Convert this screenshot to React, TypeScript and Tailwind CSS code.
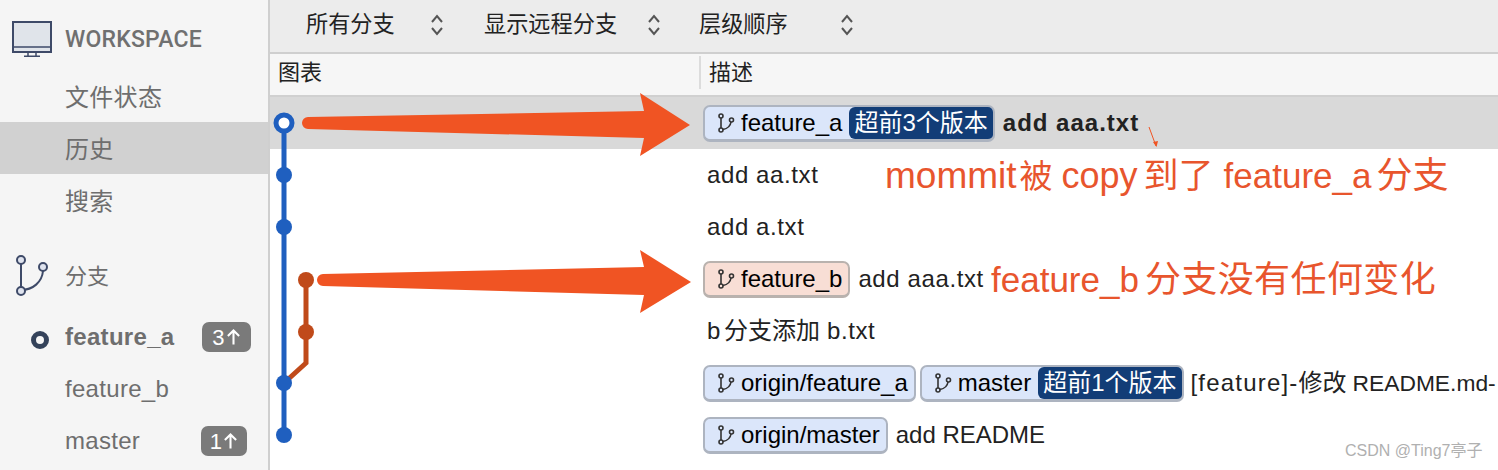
import React from 'react';

const FONT = "font-['Liberation_Sans','Noto_Sans_CJK_SC',sans-serif]";

const BranchGlyph: React.FC<{ className?: string }> = ({ className }) => (
  <svg viewBox="0 0 18 20" className={className} fill="none" stroke="currentColor" strokeWidth="1.6">
    <circle cx="4" cy="3" r="2" />
    <circle cx="4" cy="17" r="2" />
    <circle cx="14.5" cy="7" r="2" />
    <path d="M4 5v10M6 16.5c5-1 7.5-4 8-7.5" />
  </svg>
);

const Updown: React.FC = () => (
  <svg viewBox="0 0 14 24" className="w-[14px] h-[24px] text-[#555]" fill="none" stroke="currentColor" strokeWidth="2">
    <path d="M2 9l5-6 5 6M2 15l5 6 5-6" />
  </svg>
);

const Tag: React.FC<{ name: string; tone?: 'blue' | 'red'; ahead?: string }> = ({ name, tone = 'blue', ahead }) => (
  <span
    className={`flex items-stretch h-[37px] rounded-[7px] border-2 border-b-[3px] overflow-hidden shrink-0 text-black ${
      tone === 'blue' ? 'bg-[#dbe6fa] border-[#adb4c0]' : 'bg-[#f8ded5] border-[#b9b2ae]'
    }`}
  >
    <span className={`flex items-center pl-[12px] gap-[6px] ${ahead ? 'pr-[7px]' : 'pr-[6px]'}`}>
      <BranchGlyph className="w-[18px] h-[20px] text-[#333]" />
      {name}
    </span>
    {ahead && <span className="flex items-center px-[5px] bg-[#123d77] text-white rounded-l-[6px]">{ahead}</span>}
  </span>
);

const Row: React.FC<{ selected?: boolean; children: React.ReactNode }> = ({ selected, children }) => (
  <div className={`flex h-[52px] items-center ${selected ? 'bg-[#d9d9d9]' : ''}`}>
    <div className="w-[433px] shrink-0" />
    <div className="flex items-center gap-[4px] whitespace-nowrap min-w-0 text-[24px] text-[#222]">{children}</div>
  </div>
);

const SideBadge: React.FC<{ count: string; className?: string }> = ({ count, className }) => (
  <span className={`h-[30px] rounded-[7px] bg-[#7a7a7a] text-white text-[22px] font-normal flex items-center justify-center gap-[1px] ${className ?? ''}`}>
    {count}
    <svg viewBox="0 0 16 18" className="w-[15px] h-[18px]" fill="none" stroke="currentColor" strokeWidth="2.200">
      <path d="M8 17V2M2 8l6-6 6 6" />
    </svg>
  </span>
);

const SideItem: React.FC<{ label: string; active?: boolean; bold?: boolean; dot?: boolean; children?: React.ReactNode }> = ({
  label,
  active,
  bold,
  dot,
  children,
}) => (
  <div className={`flex items-center h-[52px] pl-[65px] pr-[17px] text-[24px] tracking-[0.3px] text-[#6e6e6e] relative ${active ? 'bg-[#d1d1d1] text-[#5c5c5c]' : ''} ${bold ? 'font-bold' : ''}`}>
    {dot && <span className="absolute left-[31px] top-[20px] w-[18px] h-[18px] rounded-full border-[5px] border-[#34425a]" />}
    <span className="flex-1">{label}</span>
    {children}
  </div>
);

export default function App() {
  return (
    <div className={`relative flex w-[1498px] h-[470px] overflow-hidden bg-white ${FONT}`}>
      <aside className="w-[270px] shrink-0 bg-[#f5f5f5] border-r-2 border-[#cfcfcf] pt-[13px]">
        <div className="flex items-center h-[52px] pl-[12px] gap-[13px]">
          <svg viewBox="0 0 40 36" className="w-[40px] h-[36px]">
            <rect x="1" y="1" width="38" height="30" fill="#e0e4ea" stroke="#3e4a68" strokeWidth="2" />
            <path d="M1 26h38" stroke="#3e4a68" strokeWidth="1.5" />
            <path d="M16 31v4M24 31v4M12 35.200h16" stroke="#3e4a68" strokeWidth="1.500" />
          </svg>
          <span className="pt-[3px] font-['Roboto',sans-serif] text-[23px] tracking-[0.2px] font-medium text-[#707070]">WORKSPACE</span>
        </div>
        <div className="mt-[5px] [&>div>span:last-child]:pt-[4px]">
          <SideItem label="文件状态" />
          <SideItem label="历史" active />
          <SideItem label="搜索" />
        </div>
        <div className="flex items-center h-[52px] mt-[24px] pl-[16px] gap-[17px] text-[22px] text-[#6e6e6e]">
          <svg viewBox="0 0 32 42" className="w-[32px] h-[42px]" fill="#dfe3ee" stroke="#3e4a68" strokeWidth="2">
            <path d="M5 8v26M5 35c12 0 21-8 22-19" fill="none" />
            <circle cx="5" cy="5" r="4" />
            <circle cx="5" cy="36" r="4" />
            <circle cx="27" cy="12" r="4" />
          </svg>
          <span>分支</span>
        </div>
        <div className="mt-[9px]">
          <SideItem label="feature_a" bold dot>
            <SideBadge count="3" className="w-[49px]" />
          </SideItem>
          <SideItem label="feature_b" />
          <SideItem label="master">
            <SideBadge count="1" className="w-[46px] mr-[4px]" />
          </SideItem>
        </div>
      </aside>

      <main className="flex-1 flex flex-col min-w-0 text-[#222]">
        <div className="flex items-center h-[54px] shrink-0 bg-[#ececec] border-b-2 border-[#cfcfcf] pb-[2px] pl-[36px] text-[22.200px]">
          <span className="w-[90px]">所有分支</span>
          <span className="ml-[34px]"><Updown /></span>
          <span className="ml-[40px] w-[134px]">显示远程分支</span>
          <span className="ml-[29px]"><Updown /></span>
          <span className="ml-[38px] w-[89px]">层级顺序</span>
          <span className="ml-[52px]"><Updown /></span>
        </div>
        <div className="flex items-center h-[43px] shrink-0 bg-[#f6f6f6] border-b-2 border-[#d0d0d0] pb-[4px] text-[22px]">
          <span className="w-[431px] pl-[8px] border-r-2 border-[#dcdcdc]">图表</span>
          <span className="pl-[8px]">描述</span>
        </div>

        <Row selected>
          <Tag name="feature_a" ahead="超前3个版本" />
          <span className="ml-[4px] font-bold tracking-[1px]">add aaa.txt</span>
        </Row>
        <Row><span className="pl-[4px] tracking-[0.6px]">add aa.txt</span></Row>
        <Row><span className="pl-[4px] tracking-[0.6px]">add a.txt</span></Row>
        <Row>
          <Tag name="feature_b" tone="red" />
          <span className="ml-[4px] tracking-[0.6px]">add aaa.txt</span>
        </Row>
        <Row>
          <span className="pl-[4px] tracking-[0.6px]">
            b<span className="ml-[3px] tracking-normal">分支添加</span><span className="ml-[7px]">b.txt</span>
          </span>
        </Row>
        <Row>
          <Tag name="origin/feature_a" />
          <Tag name="master" ahead="超前1个版本" />
          <span className="ml-[3px] tracking-[1.2px]">
            [feature]-<span className="tracking-normal">修改</span>
            <span className="ml-[6px] text-[22.800px] tracking-normal">README.md-</span>
          </span>
        </Row>
        <Row>
          <Tag name="origin/master" />
          <span className="ml-[4px]">add README</span>
        </Row>
      </main>

      {/* commit graph + hand drawn arrows sit over the table */}
      <svg className="absolute inset-0 pointer-events-none" width="1498" height="470" viewBox="0 0 1498 470" fill="none">
        <path d="M284 123V435" stroke="#1f5fbf" strokeWidth="5" />
        <path d="M306 280V363L284 383" stroke="#c04a1a" strokeWidth="5" />
        <circle cx="284" cy="123" r="8" fill="#fff" stroke="#1f5fbf" strokeWidth="5" />
        <circle cx="284" cy="175" r="8" fill="#1f5fbf" />
        <circle cx="284" cy="227" r="8" fill="#1f5fbf" />
        <circle cx="284" cy="383" r="8" fill="#1f5fbf" />
        <circle cx="284" cy="435" r="8" fill="#1f5fbf" />
        <circle cx="306" cy="280" r="8" fill="#c04a1a" />
        <circle cx="306" cy="332" r="8" fill="#c04a1a" />
        <path d="M308 117L644 111L640 93L690 125L640 156L644 138L308 129A6 6 0 0 1 308 117Z" fill="#f05423" />
        <path d="M323 274L644 267L640 250L691 282L640 313L644 295L323 286A6 6 0 0 1 323 274Z" fill="#f05423" />
        <path d="M1149 127L1156 146" stroke="#f05423" strokeWidth="1" />
        <path d="M1153 142L1156.500 147L1158 141Z" fill="#f05423" />
      </svg>

      <div className="absolute left-[885px] top-[155px] flex items-baseline text-[36px] leading-[42px] text-[#e8552d] whitespace-nowrap">
        <span className="text-[37px]">mommit</span>
        <span className="ml-[3px] text-[33px]">被</span>
        <span className="ml-[9px]">copy</span>
        <span className="ml-[6px] text-[35px]">到了</span>
        <span className="ml-[10px] text-[35px]">feature_a</span>
        <span className="ml-[5px]">分支</span>
      </div>
      <div className="absolute left-[991px] top-[259px] flex items-baseline text-[36px] leading-[42px] text-[#e8552d] whitespace-nowrap">
        <span className="text-[35px]">feature_b</span>
        <span className="ml-[6px] tracking-[0.4px]">分支没有任何变化</span>
      </div>
      <div className="absolute left-[1345px] top-[442px] text-[16px] leading-[18px] text-[#b0b0b0] whitespace-nowrap">CSDN @Ting7亭子</div>
    </div>
  );
}
